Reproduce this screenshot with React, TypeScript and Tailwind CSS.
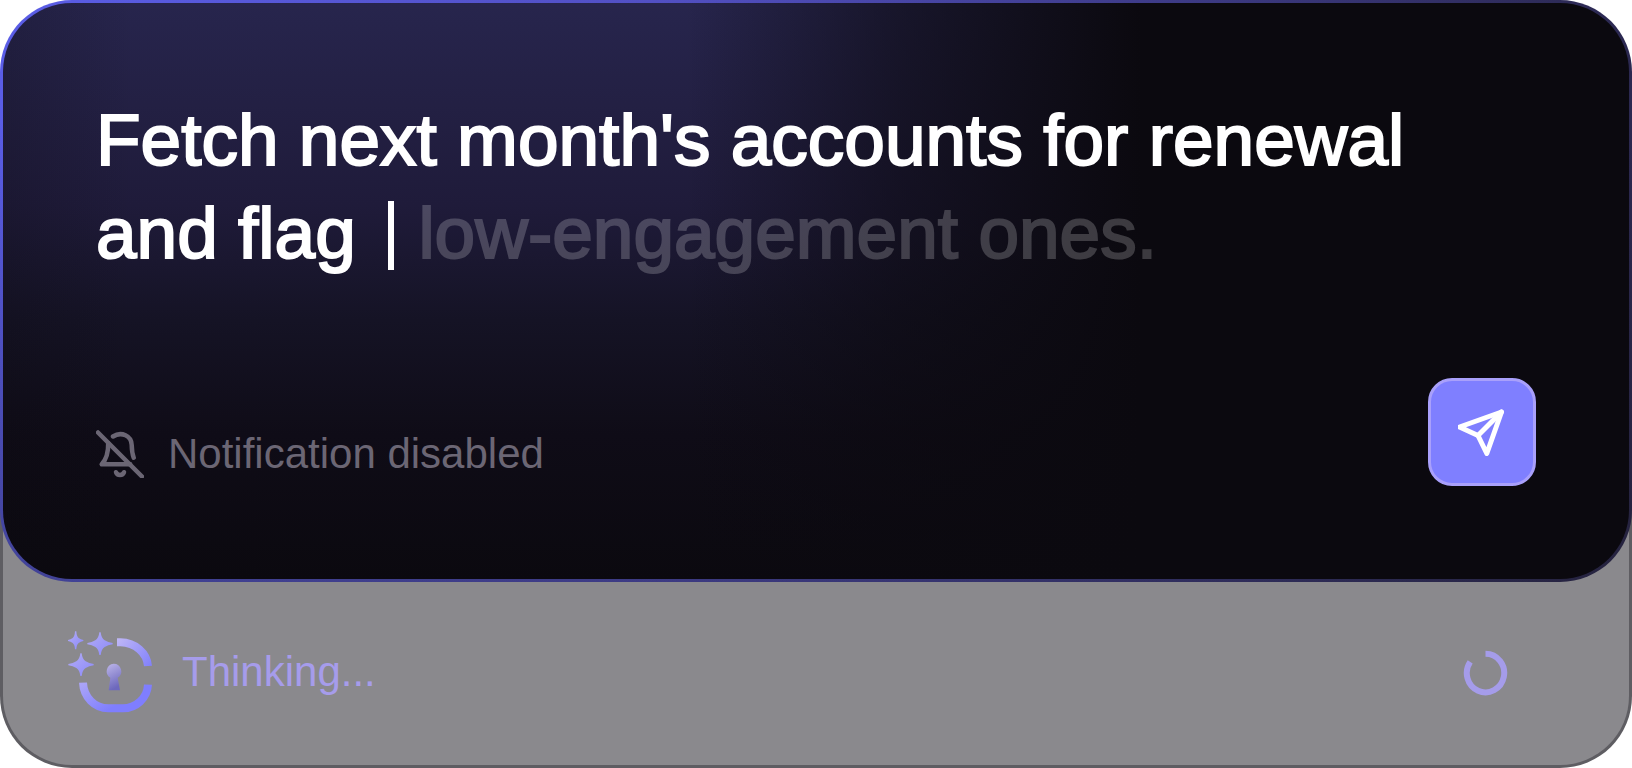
import React from 'react';

const BellOffIcon: React.FC = () => (
  <svg width="48" height="48" viewBox="0 0 48 48" fill="none" stroke="currentColor" strokeWidth="4.500" strokeLinecap="round" strokeLinejoin="round" aria-hidden="true">
    <path d="M2 2.500l44 44" />
    <path d="M12.200 13c.2 9-1 15.500-6.500 21.300h28.500" />
    <path d="M17 6.500c8.500-5.500 18.500-.5 18.700 8.500.1 5 .6 9 2 12.700" />
    <path d="M20 42.200c1.200 3.600 6.800 3.600 8 0" />
  </svg>
);

const SendIcon: React.FC = () => (
  <svg width="48" height="48" viewBox="0 0 48 48" fill="none" stroke="currentColor" strokeWidth="5" strokeLinecap="round" strokeLinejoin="round" aria-hidden="true">
    <path d="M43.500 4L1.500 19 20 27.500 28.800 45.500z" />
    <path d="M43.500 4L20 27.500" />
  </svg>
);

const LockLogo: React.FC = () => (
  <svg width="84" height="82" viewBox="54 62 252 246" fill="none" aria-hidden="true">
    <defs>
      <linearGradient id="ring" gradientUnits="userSpaceOnUse" x1="130" y1="200" x2="190" y2="290">
        <stop offset="0" stopColor="#aaa4f8" />
        <stop offset="1" stopColor="#7f7eff" />
      </linearGradient>
      <linearGradient id="arc" gradientUnits="userSpaceOnUse" x1="201" y1="90" x2="300" y2="167">
        <stop offset="0" stopColor="#beb6f6" />
        <stop offset="1" stopColor="#8382fb" />
      </linearGradient>
      <linearGradient id="key" x1="0" y1="0" x2="0.300" y2="1">
        <stop offset="0" stopColor="#bdb6ea" />
        <stop offset="1" stopColor="#6d68bd" />
      </linearGradient>
      <linearGradient id="star" x1="0" y1="0" x2="1" y2="1">
        <stop offset="0" stopColor="#b3acf5" />
        <stop offset="1" stopColor="#8b89fb" />
      </linearGradient>
    </defs>
    <path d="M201 96h10c46 1 80 32 83 71" stroke="url(#arc)" strokeWidth="24" />
    <path d="M99 217c2 44 35 77 76 77h43c41 0 74-31 76-71" stroke="url(#ring)" strokeWidth="24" />
    <g fill="url(#star)">
      <path d="M75 63h4q1 16 7 20t14 6v3q-8 2-14 6t-7 19h-4q-1-15-7-19t-14-6v-3q8-2 14-6t7-20z" />
      <path d="M148 66h4q2 18 12 24t24 8v4q-14 2-24 8t-12 24h-4q-2-18-12-24t-24-8v-4q14-2 24-8t12-24z" />
      <path d="M91 129h4q2 18 12 24t24 8v4q-14 2-24 8t-12 24h-4q-2-18-12-24t-24-8v-4q14-2 24-8t12-24z" />
    </g>
    <path d="M191 160a23 23 0 0 1 12 42.500l7 37.500h-34l5-37.500a23 23 0 0 1 10-42.500z" fill="url(#key)" />
  </svg>
);

const Spinner: React.FC = () => (
  <svg width="48" height="48" viewBox="0 0 48 48" fill="none" stroke="#a59cea" strokeWidth="6" aria-hidden="true">
    <path d="M24.500 5.700a18.700 19.300 0 1 1-15.300 8.200" />
  </svg>
);

const App: React.FC = () => {
  return (
    <main className="font-['Liberation_Sans',Arial,sans-serif]">
      <section className="relative z-10 rounded-[72px] bg-[linear-gradient(to_bottom,transparent_20%,rgba(28,26,34,0.400)),linear-gradient(to_right,#5a5de6,#5250c4_40%,#2b2850)] p-[3px]">
        <div className="rounded-[69px] bg-[linear-gradient(to_right,rgba(11,9,15,0.200),transparent_8%,transparent_42%,rgba(11,9,15,0.550)_55%,#0b090f_70%),linear-gradient(to_bottom,#27254d,#1f1b3a_35%,#151325_55%,#0f0c17_75%,#0b090f)] px-[93px] pt-[90px] pb-[93px]">
          <p className="text-[73px] leading-[93px] text-white [-webkit-text-stroke:2px_currentColor]">
            Fetch next month's accounts for renewal
            <br />
            and flag{' '}
            <span className="mr-1 ml-3 inline-block h-[69px] w-1.5 bg-white align-[-12px]" />{' '}
            <span className="opacity-20">low-engagement ones.</span>
          </p>
          <div className="mt-[99px] flex items-end justify-between">
            <div className="flex items-center gap-6 pb-1.5 text-[#6b6674]">
              <BellOffIcon />
              <span className="text-[42px] leading-[52px]">Notification disabled</span>
            </div>
            <button
              type="button"
              aria-label="Send"
              className="flex size-[108px] items-center justify-center rounded-3xl border-[3px] border-[#a9a0fb] bg-[#7f7fff] text-white"
            >
              <SendIcon />
            </button>
          </div>
        </div>
      </section>

      {/* tucked under the rounded bottom edge of the prompt card */}
      <div
        className="-mt-[72px] flex items-center justify-between rounded-b-[72px] border-x-[3px] border-b-[3px] border-[#5e5d62] bg-[#8a898d] pt-[121px] pr-[120px] pb-[52px] pl-[65px]"
        role="status"
      >
        <div className="flex items-center gap-[30px]">
          <LockLogo />
          <span className="text-[42px] leading-[52px] text-[#a69ceb]">Thinking...</span>
        </div>
        <Spinner />
      </div>
    </main>
  );
};

export default App;
